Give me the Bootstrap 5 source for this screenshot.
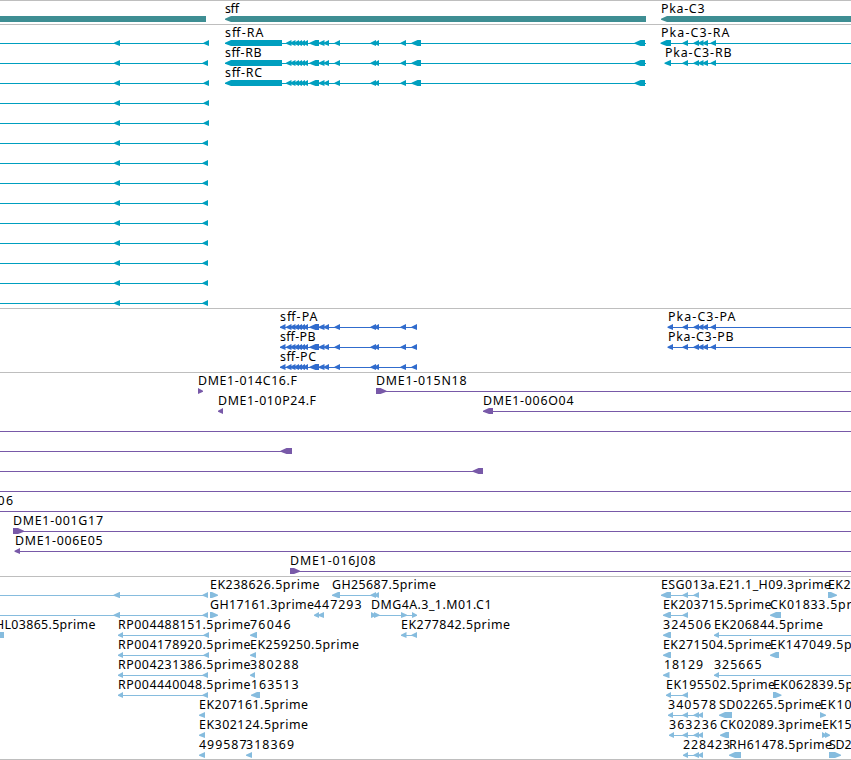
<!DOCTYPE html>
<html lang="en">

<head>
    <meta charset="UTF-8">
    <meta name="viewport" content="width=device-width, initial-scale=1.0">
    <title>Genome Browser</title>

    <link href="https://cdn.jsdelivr.net/npm/bootstrap@5.3.0/dist/css/bootstrap.min.css" rel="stylesheet">

    <style>
        body {
            font-family: "Noto Sans", "Open Sans", sans-serif;
            font-size: 12.4px;
        }

        .track {
            border-top: 1px solid #bebebe;
            padding-bottom: 3px;
        }

        .track:last-child {
            border-bottom: 1px solid #bebebe;
            padding-bottom: 2px;
        }

        .lane {
            height: 20px;
            overflow: visible;
        }

        .lane text {
            fill: #000;
        }

        .gene { color: #3e8e93; }
        .transcript { color: #009fbf; }
        .protein { color: #316ccd; }
        .bac { color: #7859a8; }
        .est { color: #86bcde; }
    </style>
</head>

<body class="bg-white overflow-hidden">
    <main id="tracks" class="d-flex flex-column">
        <section class="track gene" id="gene"></section>
        <section class="track transcript" id="transcript"></section>
        <section class="track protein" id="protein"></section>
        <section class="track bac" id="bac"></section>
        <section class="track est" id="est"></section>
    </main>

    <script src="https://cdn.jsdelivr.net/npm/bootstrap@5.3.0/dist/js/bootstrap.bundle.min.js"></script>
    <script>
        // feature: [label, label start, label end, line start, line end, direction, blocks]
        // a block is [start, end]; direction is '<', '>' or '-' for a block without a tip
        var sffExons = [[286, 291.5], [290, 295.5], [294, 299], [297, 302], [300, 305], [303, 308],
            [309.5, 319], [318.5, 324.5], [323.5, 329], [334.5, 340], [370.5, 376], [374, 379], [400.5, 406]];
        var pkaExons = [[682.5, 688], [693.5, 699], [698, 703.5], [702.5, 708], [710.5, 716]];

        function sffRna(label, end) {
            return [label, 225, end, 225, 646, '<', [[225, 282]].concat(sffExons, [[411.5, 421], [634.5, 645]])];
        }

        function sffProtein(label, end) {
            return [label, 280, end, 280, 417, '<', [[280, 285.5]].concat(sffExons, [[411.5, 417]])];
        }

        function leftRna(end) {
            return ['', 0, 0, 0, end, '<', [[114, 120], [end - 5.5, end]]];
        }

        function line(start, end) {
            return ['', 0, 0, start, end, '-', []];
        }

        function rp(label, end) {
            return [label, 118, 250.5, 118, end, '<', [[118, 123], [end - 5.5, end]]];
        }

        // feature with no line between its blocks
        function single(label, start, labelEnd, dir, end) {
            return [label, start, labelEnd, 0, 0, dir, [[start, end]]];
        }

        var data = {
            gene: [[
                ['', 0, 0, 0, 0, '-', [[0, 206]]],
                single('sff', 225, 239, '<', 646),
                single('Pka-C3', 661, 704.5, '<', 860)
            ]],
            transcript: [
                [leftRna(209), sffRna('sff-RA', 263.5),
                    ['Pka-C3-RA', 661, 729.5, 661, 851, '<', [[660.5, 671]].concat(pkaExons)]],
                [leftRna(208), sffRna('sff-RB', 261.5),
                    ['Pka-C3-RB', 665, 731.5, 665, 851, '<', [[664.5, 671]].concat(pkaExons)]],
                [leftRna(209), sffRna('sff-RC', 262)],
                [leftRna(209)], [leftRna(209)],
                [leftRna(208)], [leftRna(208)], [leftRna(208)], [leftRna(208)], [leftRna(208)],
                [leftRna(208)], [leftRna(208)], [leftRna(208)], [leftRna(208)]
            ],
            protein: [
                [sffProtein('sff-PA', 317.5), ['Pka-C3-PA', 668, 735.5, 668, 851, '<', [[667.5, 673]].concat(pkaExons)]],
                [sffProtein('sff-PB', 315.5), ['Pka-C3-PB', 668, 733.5, 668, 851, '<', [[667.5, 673]].concat(pkaExons)]],
                [sffProtein('sff-PC', 316)]
            ],
            bac: [
                [single('DME1-014C16.F', 198, 297, '>', 203),
                    ['DME1-015N18', 376, 466.5, 376, 851, '>', [[376, 386.5]]]],
                [single('DME1-010P24.F', 218, 316, '<', 223),
                    ['DME1-006O04', 483, 573.5, 483, 851, '<', [[483, 493]]]],
                [line(0, 851)],
                [['', 0, 0, 0, 292, '<', [[280.5, 292]]]],
                [['', 0, 0, 0, 483, '<', [[472.5, 483]]]],
                [line(0, 851)],
                [['06', -2.5, 13, 0, 851, '-', []]],
                [['DME1-001G17', 13, 103, 13, 851, '>', [[13, 24]]]],
                [['DME1-006E05', 15, 102.5, 15, 851, '<', [[14.5, 20]]]],
                [['DME1-016J08', 290, 375.5, 290, 851, '>', [[290, 300]]]]
            ],
            est: [
                [['', 0, 0, 0, 208, '<', [[113.5, 120], [202.5, 208]]],
                    single('EK238626.5prime', 210, 319.5, '>', 218),
                    ['GH25687.5prime', 332, 436, 332, 379, '<', [[332, 340], [370.5, 376], [374, 379]]],
                    ['ESG013a.E21.1_H09.3prime', 661, 831, 661, 699, '<', [[661, 671], [682.5, 688], [693.5, 699]]],
                    single('EK2', 828, 850.5, '>', 837)],
                [['', 0, 0, 0, 208, '<', [[113.5, 120], [202.5, 208]]],
                    single('GH17161.3prime', 210, 314, '>', 218),
                    ['447293', 314, 361.5, 0, 0, '<', [[314, 319], [318, 324]]],
                    ['DMG4A.3_1.M01.C1', 371, 491.5, 371, 417, '>', [[371, 376.5], [374, 379.5], [401, 407], [412, 417]]],
                    ['EK203715.5prime', 663, 771.5, 663, 688, '<', [[663, 671], [682.5, 688]]],
                    single('CK01833.5pr', 770, 851.5, '<', 781)],
                [['HL03865.5prime', -5, 95.5, 0, 0, '-', [[0, 4]]],
                    rp('RP004488151.5prime', 209),
                    single('76046', 250, 290.5, '<', 257),
                    ['EK277842.5prime', 401, 510, 401, 417, '<', [[401, 406.5], [411.5, 417]]],
                    single('324506', 663, 711, '<', 671),
                    ['EK206844.5prime', 714, 823, 714, 851, '<', [[714, 719]]]],
                [rp('RP004178920.5prime', 209),
                    single('EK259250.5prime', 250, 359, '<', 256),
                    single('EK271504.5prime', 663, 771.5, '<', 671),
                    single('EK147049.5p', 770, 851.5, '<', 779)],
                [rp('RP004231386.5prime', 208),
                    single('380288', 250, 298.5, '<', 255),
                    ['18129', 664, 703, 0, 0, '<', [[663, 669.5]]],
                    ['325665', 714, 761.5, 714, 851, '<', [[714, 719]]]],
                [rp('RP004440048.5prime', 208),
                    single('163513', 251, 298.5, '<', 260),
                    ['EK195502.5prime', 666, 775, 666, 688, '<', [[666, 671], [682.5, 688]]],
                    single('EK062839.5p', 773, 853, '>', 781.5)],
                [single('EK207161.5prime', 199, 308, '<', 205),
                    ['340578', 668, 716, 668, 703, '<', [[668, 673], [682.5, 688], [693.5, 699], [698, 703]]],
                    single('SD02265.5prime', 719, 821.5, '<', 732),
                    single('EK10', 820, 851.5, '>', 826)],
                [single('EK302124.5prime', 199, 308, '<', 205),
                    ['363236', 669, 717, 669, 703, '<', [[669, 674], [682.5, 688], [693.5, 699], [698, 703]]],
                    single('CK02089.3prime', 720, 822, '<', 729),
                    ['EK15', 822, 851.5, 0, 0, '>', [[822, 827], [825, 830]]]],
                [single('499587', 199, 246.5, '<', 205),
                    single('318369', 246, 294, '<', 252),
                    ['228423', 683, 730, 683, 703, '<', [[683, 688], [693.5, 699], [698, 703]]],
                    single('RH61478.5prime', 729, 832, '<', 741),
                    single('SD2', 829, 851.5, '>', 841)]
            ]
        };

        function drawBlock(block, dir) {
            var a = block[0], b = block[1];
            var tip = Math.min(6, b - a);
            if (dir === '<') {
                return `<path d="M${a} 17.7L${a + tip} 15H${b}V21H${a + tip}L${a} 18.7Z"/>`;
            }
            if (dir === '>') {
                return `<path d="M${b} 17.7L${b - tip} 15H${a}V21H${b - tip}L${b} 18.7Z"/>`;
            }
            return `<path d="M${a} 15H${b}V21H${a}Z"/>`;
        }

        function drawFeature(f) {
            var out = '';
            if (f[4] > f[3]) {
                out += `<path d="M${f[3]} 18H${f[4]}V19H${f[3]}Z"/>`;
            }
            out += f[6].map((block) => drawBlock(block, f[5])).join('');
            if (f[0]) {
                out += `<text x="${f[1]}" y="12" textLength="${f[2] - f[1]}">${f[0]}</text>`;
            }
            return out;
        }

        Object.keys(data).forEach((name) => {
            document.getElementById(name).innerHTML = data[name].map((lane) =>
                `<svg class="lane d-block w-100" fill="currentColor">${lane.map(drawFeature).join('')}</svg>`
            ).join('');
        });
    </script>
</body>

</html>
